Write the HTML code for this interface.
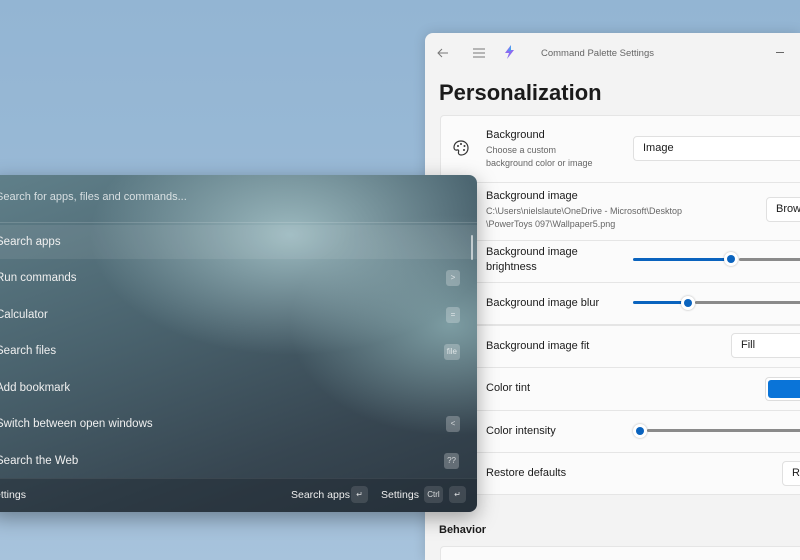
<!DOCTYPE html>
<html><head><meta charset="utf-8"><style>
*{margin:0;padding:0;box-sizing:border-box}
html,body{width:800px;height:560px;overflow:hidden}
body{position:relative;font-family:"Liberation Sans",sans-serif;background:linear-gradient(180deg,#93b5d3 0%,#9dbcd8 60%,#a7c3dc 100%)}
.a{position:absolute;white-space:nowrap}
#win{position:absolute;left:425px;top:33px;width:375px;height:527px;background:#f3f3f3;border-radius:8px 0 0 0;box-shadow:0 0 12px rgba(0,0,0,.15)}
.card{position:absolute;left:440px;width:370px;background:#fbfbfb;border:1px solid #e5e5e5}
.t{font-size:11px;color:#1b1b1b}
.s{font-size:9px;color:#666}
.box{position:absolute;background:#fff;border:1px solid #e0e0e0;border-radius:4px;font-size:11px;color:#1b1b1b;padding-left:9px}
.tr{position:absolute;height:3px;background:#8a8a8a;border-radius:2px}
.fl{position:absolute;height:3px;background:#0a63be;border-radius:2px}
.th{position:absolute;width:14px;height:14px;border-radius:50%;background:#fff;box-shadow:0 0 2px rgba(0,0,0,.3)}
.th::after{content:"";position:absolute;left:3px;top:3px;width:8px;height:8px;border-radius:50%;background:#0a63be}
#pal{position:absolute;left:-10px;top:175px;width:487px;height:337px;border-radius:8px;overflow:hidden;box-shadow:0 6px 20px rgba(0,0,0,.35);
background:radial-gradient(ellipse 200px 120px at 300px 60px,rgba(170,200,205,.85),transparent),radial-gradient(ellipse 160px 110px at 460px 150px,rgba(140,175,180,.8),transparent),linear-gradient(160deg,#60808a 0%,#4a636e 40%,#374651 75%,#2c3842 100%)}
.pi{position:absolute;left:6px;font-size:11.5px;color:#f0f0f0}
.k{position:absolute;right:17px;height:16px;min-width:14px;padding:0 3px;border-radius:3px;background:rgba(255,255,255,.25);color:rgba(255,255,255,.7);font-size:8px;line-height:16px;text-align:center}
.fk{position:absolute;top:311px;height:17px;border-radius:4px;background:rgba(255,255,255,.12);color:rgba(255,255,255,.8);font-size:8px;line-height:17px;text-align:center}
</style></head><body>
<div id="win"></div>
<svg class="a" style="left:436px;top:47px" width="14" height="12"><path d="M12 6H2M6 2L2 6l4 4" stroke="#777" fill="none" stroke-width="1"/></svg>
<svg class="a" style="left:472px;top:47px" width="14" height="12"><path d="M1 2h12M1 6h12M1 10h12" stroke="#777" stroke-width="1"/></svg>
<svg class="a" style="left:502px;top:44px" width="16" height="16"><path d="M9 1L3 9h4l-2 6 7-9H8z" fill="#8a6cf0"/><path d="M9 1L6 7h3z" fill="#4aa0f0"/></svg>
<div class="a" style="left:541px;top:48px;font-size:9.5px;color:#666">Command Palette Settings</div>
<div class="a" style="left:776px;top:52px;width:8px;height:1px;background:#666"></div>
<div class="a" style="left:439px;top:80px;font-size:22px;font-weight:bold;color:#1b1b1b">Personalization</div>

<div class="card" style="top:115px;height:68px;border-radius:4px 0 0 0"></div>
<svg class="a" style="left:452px;top:139px" width="18" height="18" viewBox="0 0 18 18"><path d="M9 2C4.5 2 2 5 2 8.5c0 2 1.5 3 3 2.5s2 .5 1.5 2S7 16 9 16c4 0 7-3 7-7s-3-7-7-7z" fill="none" stroke="#333" stroke-width="1.2"/><circle cx="6" cy="7" r="1" fill="#333"/><circle cx="9" cy="5" r="1" fill="#333"/><circle cx="12.5" cy="7" r="1" fill="#333"/><circle cx="12" cy="11" r="1" fill="#333"/></svg>
<div class="a t" style="left:486px;top:129px">Background</div>
<div class="a s" style="left:486px;top:145px">Choose a custom</div>
<div class="a s" style="left:486px;top:158px">background color or image</div>
<div class="box" style="left:633px;top:136px;width:200px;height:25px;line-height:23px">Image</div>

<div class="card" style="top:182px;height:59px"></div>
<div class="a t" style="left:486px;top:190px">Background image</div>
<div class="a s" style="left:486px;top:206px">C:\Users\nielslaute\OneDrive - Microsoft\Desktop</div>
<div class="a s" style="left:486px;top:219px">\PowerToys 097\Wallpaper5.png</div>
<div class="box" style="left:766px;top:197px;width:60px;height:25px;line-height:23px">Browse</div>

<div class="card" style="top:240px;height:43px"></div>
<div class="a t" style="left:486px;top:246px">Background image</div>
<div class="a t" style="left:486px;top:261px">brightness</div>
<div class="fl" style="left:633px;top:258px;width:95px"></div>
<div class="tr" style="left:739px;top:258px;width:70px"></div>
<div class="th" style="left:724px;top:252px"></div>

<div class="card" style="top:282px;height:43px"></div>
<div class="a t" style="left:486px;top:297px">Background image blur</div>
<div class="fl" style="left:633px;top:301px;width:50px"></div>
<div class="tr" style="left:695px;top:301px;width:110px"></div>
<div class="th" style="left:681px;top:296px"></div>

<div class="card" style="top:325px;height:43px"></div>
<div class="a t" style="left:486px;top:340px">Background image fit</div>
<div class="box" style="left:731px;top:333px;width:90px;height:25px;line-height:23px">Fill</div>

<div class="card" style="top:367px;height:44px"></div>
<div class="a t" style="left:486px;top:382px">Color tint</div>
<div class="a" style="left:765px;top:377px;width:50px;height:24px;border:1px solid #ddd;border-radius:4px;background:#fff;padding:2px"><div style="width:100%;height:100%;background:#0a74d8;border-radius:3px"></div></div>

<div class="card" style="top:410px;height:43px"></div>
<div class="a t" style="left:486px;top:425px">Color intensity</div>
<div class="tr" style="left:647px;top:429px;width:160px"></div>
<div class="th" style="left:633px;top:424px"></div>

<div class="card" style="top:452px;height:43px"></div>
<div class="a t" style="left:486px;top:467px">Restore defaults</div>
<div class="box" style="left:782px;top:461px;width:60px;height:25px;line-height:23px">Reset</div>

<div class="a" style="left:439px;top:524px;font-size:11px;font-weight:bold;color:#1b1b1b">Behavior</div>
<div class="card" style="top:546px;height:30px;border-radius:4px 0 0 0"></div>

<div id="pal">
 <div class="pi" style="top:16px;color:rgba(255,255,255,.75);font-size:11px">Search for apps, files and commands...</div>
 <div class="a" style="left:0;top:47px;width:487px;height:1px;background:rgba(255,255,255,.15)"></div>
 <div class="a" style="left:0;top:50px;width:487px;height:34px;background:rgba(255,255,255,.08)"></div>
 <div class="a" style="left:481px;top:60px;width:2px;height:25px;background:rgba(255,255,255,.6);border-radius:1px"></div>
 <div class="pi" style="top:61px">Search apps</div>
 <div class="pi" style="top:97px">Run commands</div><div class="k" style="top:95px">&gt;</div>
 <div class="pi" style="top:134px">Calculator</div><div class="k" style="top:132px">=</div>
 <div class="pi" style="top:170px">Search files</div><div class="k" style="top:169px">file</div>
 <div class="pi" style="top:207px">Add bookmark</div>
 <div class="pi" style="top:243px">Switch between open windows</div><div class="k" style="top:241px">&lt;</div>
 <div class="pi" style="top:280px">Search the Web</div><div class="k" style="top:278px;right:18px">??</div>
 <div class="a" style="left:0;top:303px;width:487px;height:34px;background:rgba(30,40,48,.45);border-top:1px solid rgba(255,255,255,.08)"></div>
 <div class="pi" style="top:314px;left:-2px;font-size:10.5px">Settings</div>
 <div class="a" style="left:301px;top:314px;font-size:10.5px;color:#eee">Search apps</div>
 <div class="fk" style="left:361px;width:17px">↵</div>
 <div class="a" style="left:391px;top:314px;font-size:10.5px;color:#eee">Settings</div>
 <div class="fk" style="left:434px;width:19px">Ctrl</div>
 <div class="fk" style="left:459px;width:17px">↵</div>
</div>
</body></html>
